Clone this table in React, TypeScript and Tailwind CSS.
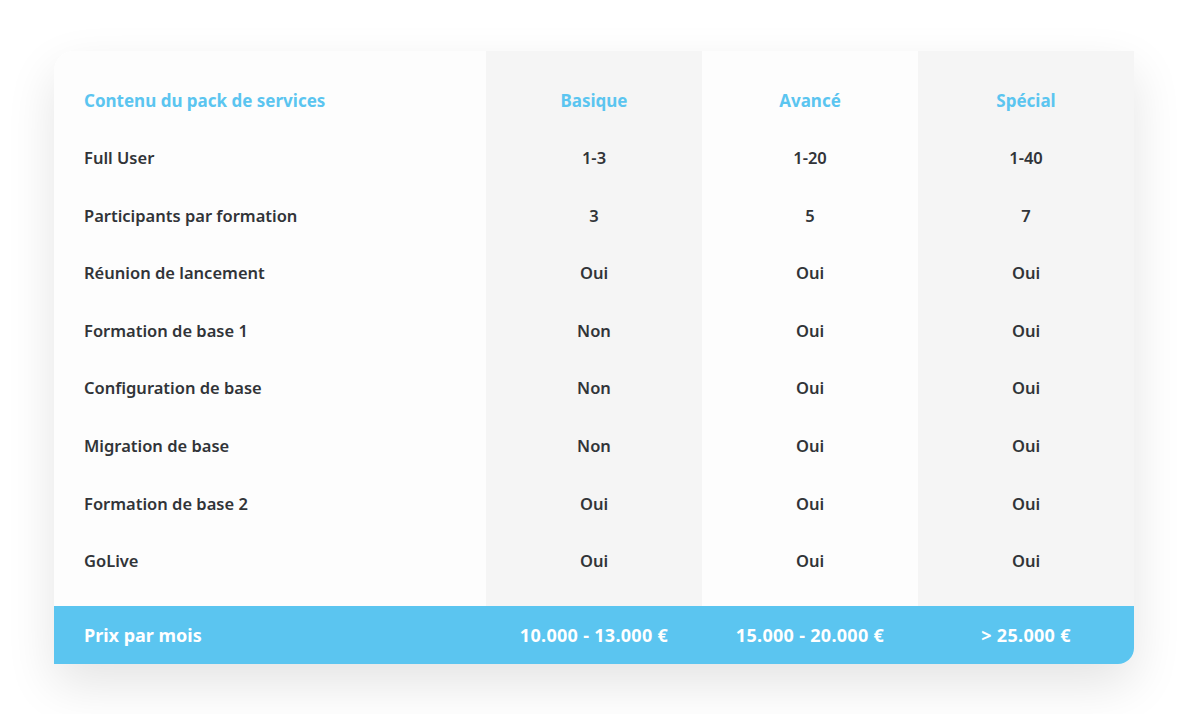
import React from "react";

const rows: [string, string, string, string][] = [
  ["Full User", "1-3", "1-20", "1-40"],
  ["Participants par formation", "3", "5", "7"],
  ["Réunion de lancement", "Oui", "Oui", "Oui"],
  ["Formation de base 1", "Non", "Oui", "Oui"],
  ["Configuration de base", "Non", "Oui", "Oui"],
  ["Migration de base", "Non", "Oui", "Oui"],
  ["Formation de base 2", "Oui", "Oui", "Oui"],
  ["GoLive", "Oui", "Oui", "Oui"],
];

const colBg = ["bg-[#fdfdfd]", "bg-[#f5f5f5]", "bg-[#fdfdfd]", "bg-[#f5f5f5]"];

export default function App() {
  return (
    <div
      className="w-[1190px] h-[714px] bg-white flex items-start justify-start pl-[54px] pt-[51px]"
      style={{ fontFamily: '"Noto Sans", "Open Sans", sans-serif' }}
    >
      <div className="w-[1080px] rounded-tl-[20px] rounded-br-[16px] overflow-hidden shadow-[0_20px_50px_rgba(0,0,0,0.11)]">
        <div className="grid grid-cols-[432px_216px_216px_216px]">
          {[0, 1, 2, 3].map((c) => (
            <div key={c} className={`${colBg[c]} pt-[21px] pb-[16px] flex flex-col`}>
              <div
                className={`h-[57.6px] flex items-center text-[17px] font-bold text-[#5bc5f0] ${
                  c === 0 ? "pl-[30px]" : "justify-center"
                }`}
              >
                {["Contenu du pack de services", "Basique", "Avancé", "Spécial"][c]}
              </div>
              {rows.map((r, i) => (
                <div
                  key={i}
                  className={`h-[57.6px] flex items-center text-[16.5px] font-semibold text-[#313438] ${
                    c === 0 ? "pl-[30px]" : "justify-center"
                  }`}
                >
                  {r[c]}
                </div>
              ))}
            </div>
          ))}
        </div>
        <div className="grid grid-cols-[432px_216px_216px_216px] h-[58px] bg-[#5bc5f0] text-white font-bold text-[18px]">
          <div className="flex items-center pl-[30px]">Prix par mois</div>
          <div className="flex items-center justify-center tracking-[0.3px]">10.000 - 13.000 €</div>
          <div className="flex items-center justify-center tracking-[0.3px]">15.000 - 20.000 €</div>
          <div className="flex items-center justify-center tracking-[0.3px]">&gt; 25.000 €</div>
        </div>
      </div>
    </div>
  );
}
